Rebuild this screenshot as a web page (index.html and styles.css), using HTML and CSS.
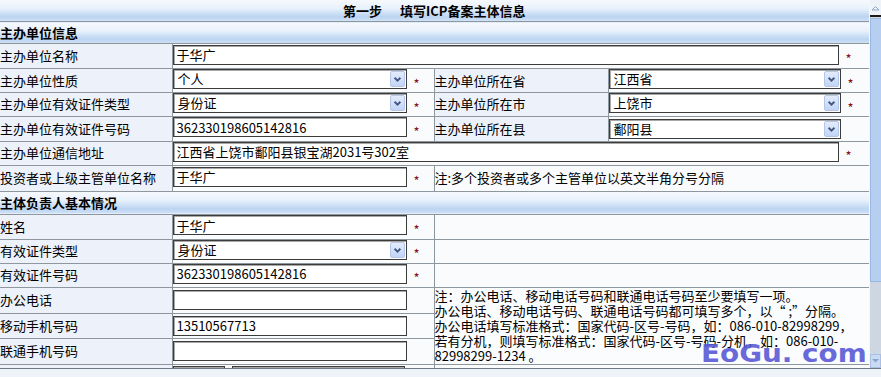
FILE: index.html
```html
<!DOCTYPE html>
<html lang="zh-CN">
<head>
<meta charset="utf-8">
<title>第一步 填写ICP备案主体信息</title>
<link rel="stylesheet" href="styles.css">
</head>
<body>
<div class="frame">
  <div class="view">
    <table class="form">
      <colgroup><col class="c1"><col class="c2"><col class="c3"><col class="c4"></colgroup>
      <tr class="h21"><th colspan="4" class="title">第一步<span class="gap"></span>填写ICP备案主体信息</th></tr>
      <tr class="h21"><th colspan="4" class="sec">主办单位信息</th></tr>
      <tr class="h24">
        <td class="lab">主办单位名称</td>
        <td colspan="3" class="val"><input class="txt wide" value="于华广"><span class="req">*</span></td>
      </tr>
      <tr class="h23">
        <td class="lab">主办单位性质</td>
        <td class="val"><div class="sel"><span class="opt">个人</span><span class="btn"><svg width="15" height="17" viewBox="0 0 15 17"><path d="M4 7 L7.5 10.5 L11 7" fill="none" stroke="#3f5582" stroke-width="2.2"/></svg></span></div><span class="req">*</span></td>
        <td class="lab">主办单位所在省</td>
        <td class="val"><div class="sel r"><span class="opt">江西省</span><span class="btn"><svg width="15" height="17" viewBox="0 0 15 17"><path d="M4 7 L7.5 10.5 L11 7" fill="none" stroke="#3f5582" stroke-width="2.2"/></svg></span></div><span class="req">*</span></td>
      </tr>
      <tr class="h22">
        <td class="lab">主办单位有效证件类型</td>
        <td class="val"><div class="sel"><span class="opt">身份证</span><span class="btn"><svg width="15" height="17" viewBox="0 0 15 17"><path d="M4 7 L7.5 10.5 L11 7" fill="none" stroke="#3f5582" stroke-width="2.2"/></svg></span></div><span class="req">*</span></td>
        <td class="lab">主办单位所在市</td>
        <td class="val"><div class="sel r"><span class="opt">上饶市</span><span class="btn"><svg width="15" height="17" viewBox="0 0 15 17"><path d="M4 7 L7.5 10.5 L11 7" fill="none" stroke="#3f5582" stroke-width="2.2"/></svg></span></div><span class="req">*</span></td>
      </tr>
      <tr class="h24">
        <td class="lab">主办单位有效证件号码</td>
        <td class="val"><input class="txt" value="362330198605142816"><span class="req">*</span></td>
        <td class="lab">主办单位所在县</td>
        <td class="val"><div class="sel r"><span class="opt">鄱阳县</span><span class="btn"><svg width="15" height="17" viewBox="0 0 15 17"><path d="M4 7 L7.5 10.5 L11 7" fill="none" stroke="#3f5582" stroke-width="2.2"/></svg></span></div></td>
      </tr>
      <tr class="h23">
        <td class="lab">主办单位通信地址</td>
        <td colspan="3" class="val"><input class="txt wide" value="江西省上饶市鄱阳县银宝湖2031号302室"><span class="req">*</span></td>
      </tr>
      <tr class="h25">
        <td class="lab">投资者或上级主管单位名称</td>
        <td class="val"><input class="txt" value="于华广"><span class="req">*</span></td>
        <td colspan="2" class="val note1">注:多个投资者或多个主管单位以英文半角分号分隔</td>
      </tr>
      <tr class="h22"><th colspan="4" class="sec">主体负责人基本情况</th></tr>
      <tr class="h24">
        <td class="lab">姓名</td>
        <td class="val"><input class="txt" value="于华广"><span class="req">*</span></td>
        <td colspan="2" class="val"></td>
      </tr>
      <tr class="h23">
        <td class="lab">有效证件类型</td>
        <td class="val"><div class="sel"><span class="opt">身份证</span><span class="btn"><svg width="15" height="17" viewBox="0 0 15 17"><path d="M4 7 L7.5 10.5 L11 7" fill="none" stroke="#3f5582" stroke-width="2.2"/></svg></span></div><span class="req">*</span></td>
        <td colspan="2" class="val"></td>
      </tr>
      <tr class="h23">
        <td class="lab">有效证件号码</td>
        <td class="val"><input class="txt" value="362330198605142816"><span class="req">*</span></td>
        <td colspan="2" class="val"></td>
      </tr>
      <tr class="h25">
        <td class="lab">办公电话</td>
        <td class="val"><input class="txt" value=""></td>
        <td colspan="2" rowspan="3" class="val note2"><div class="note2-in">注：办公电话、移动电话号码和联通电话号码至少要填写一项。<br>办公电话、移动电话号码、联通电话号码都可填写多个，以“ ;”分隔。<br>办公电话填写标准格式：国家代码-区号-号码，如：086-010-82998299，<br>若有分机，则填写标准格式：国家代码-区号-号码-分机，如：086-010-<br>82998299-1234 。</div></td>
      </tr>
      <tr class="h24">
        <td class="lab">移动手机号码</td>
        <td class="val"><input class="txt" value="13510567713"></td>
      </tr>
      <tr class="h25">
        <td class="lab">联通手机号码</td>
        <td class="val"><input class="txt" value=""></td>
      </tr>
      <tr class="h24">
        <td class="lab"></td>
        <td class="val top"><input class="txt small" value=""><input class="txt mid" value=""></td>
        <td colspan="2" class="val"></td>
      </tr>
    </table>
  </div>
  <div class="sb">
    <div class="sb-up"><svg width="9" height="6" viewBox="0 0 9 6"><path d="M1 5 L4.5 1.5 L8 5 Z" fill="none" stroke="#8aa6c8" stroke-width="1"/></svg></div>
    <div class="sb-thumb"></div>
    <div class="sb-track"></div>
    <div class="sb-down"><svg width="9" height="6" viewBox="0 0 9 6"><path d="M1 1 L4.5 4.5 L8 1 Z" fill="#8aa6c8"/></svg></div>
  </div>
</div>
<div class="wm">EoGu. com</div>
</body>
</html>
```

FILE: styles.css
```css
html, body {
  margin: 0;
  padding: 0;
}
body {
  background: #eef3f9;
  font-family: "Noto Sans CJK SC", "Noto Sans", sans-serif;
  font-size: 13px;
  color: #000;
  position: relative;
  height: 377px;
  overflow: hidden;
}
.frame {
  display: flex;
  height: 368px;
  border-bottom: 1px solid #6f7a86;
  overflow: hidden;
  background: #fff;
}
.view {
  width: 869px;
  flex: none;
  overflow: hidden;
}
.form {
  width: 869px;
  table-layout: fixed;
  border-collapse: collapse;
}
.c1 { width: 172px; }
.c2 { width: 262px; }
.c3 { width: 174px; }
.c4 { width: 261px; }
.form td, .form th {
  border: 1px solid #8e969e;
  padding: 0;
  line-height: 16px;
  white-space: nowrap;
  overflow: hidden;
}
.form tr > :first-child { border-left: 0; }
.form tr:first-child > th { border-top: 0; }
.h21 > * { height: 21px; }
.h22 > * { height: 22px; }
.h23 > * { height: 23px; }
.h24 > * { height: 24px; }
.h25 > * { height: 25px; }
.title, .sec {
  background: linear-gradient(#f6f9fe 0%, #e9f1fb 40%, #d6e6f8 55%, #bcd4f1 80%, #cfe1f6 100%);
  font-weight: bold;
}
.title { text-align: center; }
.sec { text-align: left; padding-left: 2px; }
.gap { display: inline-block; width: 18px; }
.lab {
  background: #edf2fa;
  padding-left: 1px;
  text-align: left;
}
.val {
  background: #f9fbfd;
  padding-left: 2px;
}
.val.top { vertical-align: top; }
.txt {
  box-sizing: border-box;
  width: 234px;
  height: 20px;
  margin: 0;
  padding: 0 3px;
  border: 1px solid #3c3c3c;
  box-shadow: inset 1px 1px 0 #a8a8a8;
  background: #fff;
  font-family: "Noto Sans CJK SC", sans-serif;
  font-size: 13px;
  line-height: 18px;
  color: #000;
  vertical-align: middle;
  outline: none;
}
.txt.wide { width: 666px; }
.txt.small { width: 52px; margin-top: 1px; }
.txt.mid { width: 173px; margin-left: 7px; margin-top: 1px; }
.sel {
  box-sizing: border-box;
  display: inline-flex;
  align-items: center;
  width: 234px;
  height: 20px;
  border: 1px solid #3c3c3c;
  box-shadow: inset 1px 1px 0 #a8a8a8;
  background: #fff;
  vertical-align: middle;
}
.sel.r { width: 232px; }
.opt { padding-left: 4px; line-height: 18px; }
.btn {
  margin-left: auto;
  margin-right: 1px;
  width: 15px;
  height: 16px;
  box-sizing: border-box;
  border: 1px solid #b4c6ea;
  border-radius: 2px;
  background: linear-gradient(#e3ecfc, #c3d4f6);
  display: flex;
  align-items: center;
  justify-content: center;
}
.btn svg { display: block; width: 13px; height: 14px; }
.req {
  display: inline-block;
  margin-left: 7px;
  color: #8b1010;
  font-size: 13px;
  vertical-align: -6px;
}
.note1 { padding-left: 1px; }
.note2 {
  vertical-align: top;
  padding-left: 1px;
  background: #fbfcfe;
  overflow: visible;
}
.note2-in {
  height: 70px;
  line-height: 15px;
}
.sb {
  width: 12px;
  flex: none;
  display: flex;
  flex-direction: column;
  border-left: 1px solid #f4f7fb;
  box-sizing: border-box;
  background: #cfd8e2;
}
.sb-up {
  height: 15px;
  border-bottom: 2px solid #1a1a1a;
  background: #eef3fa;
  display: flex;
  align-items: center;
  justify-content: center;
}
.sb-thumb {
  height: 262px;
  margin-top: 1px;
  background: #b6cff1;
  border: 1px solid #9ab6e2;
  border-right: 0;
}
.sb-track { flex: 1; background: #cdd6e1; }
.sb-down {
  height: 12px;
  background: #c9daf3;
  border: 1px solid #a9bfe3;
  display: flex;
  align-items: center;
  justify-content: center;
}
.wm {
  position: absolute;
  left: 701px;
  top: 340px;
  font-family: "DejaVu Sans", sans-serif;
  font-weight: bold;
  font-size: 24px;
  line-height: 28px;
  color: #5a5ad6;
  opacity: 0.9;
  transform: scaleX(1.16);
  transform-origin: left top;
  white-space: nowrap;
}
```
